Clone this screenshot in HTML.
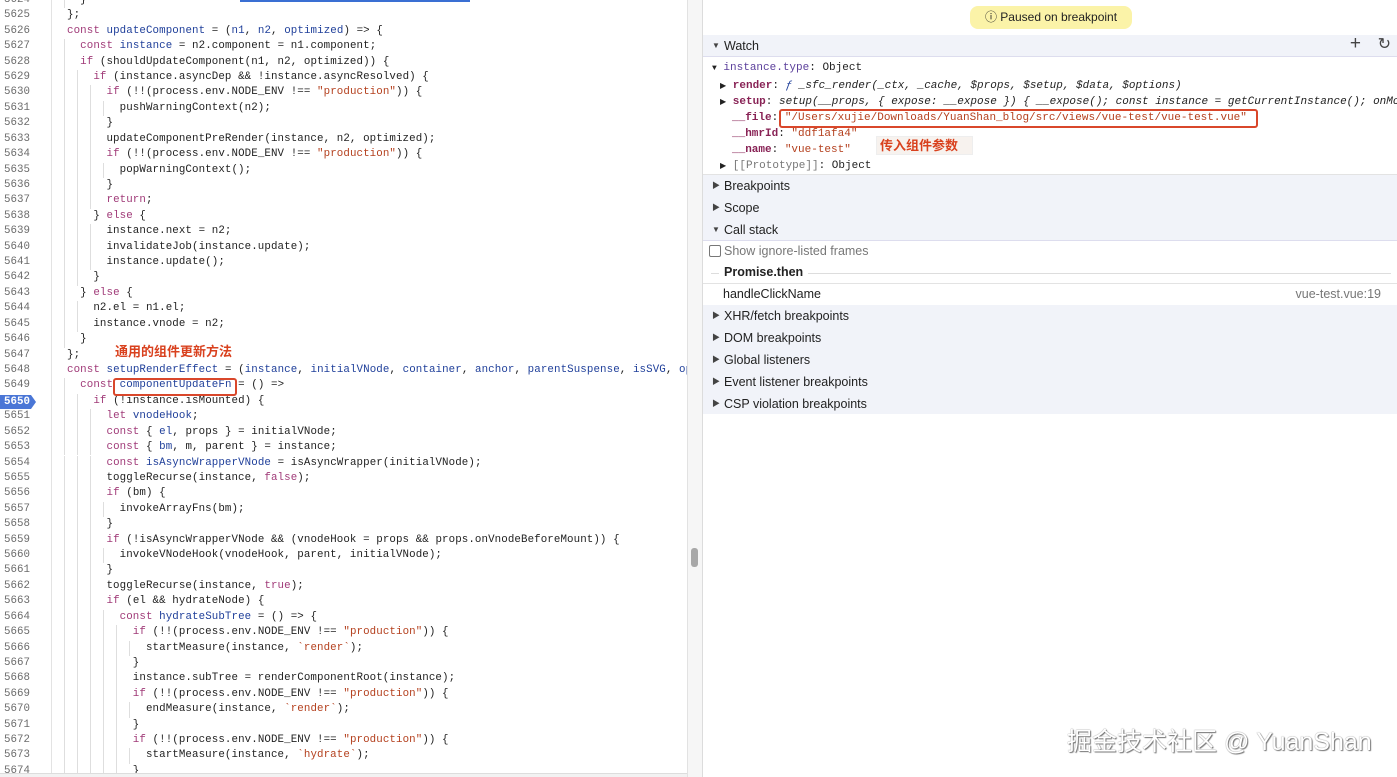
<!DOCTYPE html>
<html><head><meta charset="utf-8">
<style>
*{margin:0;padding:0;box-sizing:border-box}
body{width:1397px;height:777px;overflow:hidden;background:#fff;position:relative;font-family:"Liberation Sans","Noto Sans CJK SC",sans-serif}
#code{position:absolute;left:0;top:0;width:687px;height:773px;overflow:hidden}
.ln{position:absolute;left:0;height:15.42px;width:687px;font-family:"Liberation Mono",monospace;font-size:10.8px;line-height:15.42px;white-space:pre;color:#222}
.num{position:absolute;left:4px;color:#6b6b6b}
.txt{position:absolute;left:67px;letter-spacing:0.1px}
.g{position:absolute;top:0;width:1px;height:15.42px;background:#dedede}
.k{color:#a03a78}.d{color:#1f3f9a}.s{color:#b4401e}
.bp{position:absolute;left:0;width:31px;height:14px;background:#4a76d6;color:#fff;font-weight:bold}
.bp:after{content:"";position:absolute;right:-5px;top:0;border-left:5px solid #4a76d6;border-top:7px solid transparent;border-bottom:7px solid transparent}
#right{position:absolute;left:703px;top:0;width:694px;height:777px;font-size:12.5px;color:#222}
.hdr{position:absolute;left:0;width:694px;height:22px;line-height:22px;background:#f1f3f9;padding-left:21px}
.tri{position:absolute;left:9px;font-size:8px;color:#444}
.w{position:absolute;font-family:"Liberation Mono",monospace;font-size:11px;white-space:pre;line-height:16px}
.red{border:2px solid #d9472b;border-radius:3px;position:absolute}
</style></head><body>
<div style="position:absolute;left:240px;top:0;width:230px;height:2px;background:#3a6fd3"></div>
<div style="position:absolute;left:51px;top:0;width:1px;height:773px;background:#e3e3e3"></div>
<div id="code"></div>
<div style="position:absolute;left:687px;top:0;width:1px;height:777px;background:#e2e2e2"></div>
<div style="position:absolute;left:688px;top:0;width:14px;height:777px;background:#f6f6f6"></div>
<div style="position:absolute;left:702px;top:0;width:1px;height:777px;background:#dcdcdc"></div>
<div style="position:absolute;left:691px;top:548px;width:7px;height:19px;border-radius:3px;background:#a8a8a8"></div>
<div style="position:absolute;left:0;top:773px;width:687px;height:4px;background:#f2f2f2;border-top:1px solid #ddd"></div>

<div class="red" style="left:113px;top:378px;width:124px;height:18px"></div>
<div style="position:absolute;left:115px;top:341px;font-size:13px;color:#d9411e;font-weight:bold">通用的组件更新方法</div>

<div id="right">
 <div style="position:absolute;left:267px;top:6px;width:162px;height:23px;border-radius:8px;background:#fbf3a8;text-align:center;line-height:23px;font-size:12px">ⓘ Paused on breakpoint</div>
 <div class="hdr" style="top:35px;border-bottom:1px solid #dde"><span class="tri" style="top:0">▼</span>Watch<span style="position:absolute;right:36px;top:-2px;font-size:19px;color:#444">+</span><span style="position:absolute;right:6px;top:-1px;font-size:16px;color:#444">↻</span></div>
 <div class="w" style="left:9px;top:60px"><span style="font-size:8px">▼</span> <span style="color:#5b3f9b">instance.type</span>: Object</div>
 <div class="w" style="left:17px;top:78px"><span style="font-size:8px">▶</span> <b style="color:#882255">render</b>: <i><span style="color:#1f3f9a">ƒ</span> _sfc_render(_ctx, _cache, $props, $setup, $data, $options)</i></div>
 <div class="w" style="left:17px;top:94px"><span style="font-size:8px">▶</span> <b style="color:#882255">setup</b>: <i>setup(__props, { expose: __expose }) { __expose(); const instance = getCurrentInstance(); onMo</i></div>
 <div class="w" style="left:29px;top:110px"><b style="color:#882255">__file</b>: <span class="s">"/Users/xujie/Downloads/YuanShan_blog/src/views/vue-test/vue-test.vue"</span></div>
 <div class="w" style="left:29px;top:126px"><b style="color:#882255">__hmrId</b>: <span class="s">"ddf1afa4"</span></div>
 <div class="w" style="left:29px;top:142px"><b style="color:#882255">__name</b>: <span class="s">"vue-test"</span></div>
 <div class="w" style="left:17px;top:158px"><span style="font-size:8px">▶</span> <span style="color:#777">[[Prototype]]</span>: Object</div>
 <div class="red" style="left:76px;top:109px;width:479px;height:19px"></div>
 <div style="position:absolute;left:173px;top:136px;width:97px;height:19px;background:#f7f2ee;border:1px solid #eee;color:#d9411e;font-size:13px;font-weight:bold;line-height:18px;padding-left:3px">传入组件参数</div>
 <div style="position:absolute;left:0;top:174px;width:694px;height:1px;background:#e3e3e3"></div>
 <div class="hdr" style="top:175px"><span class="tri">▶</span>Breakpoints</div>
 <div class="hdr" style="top:197px"><span class="tri">▶</span>Scope</div>
 <div class="hdr" style="top:219px;border-bottom:1px solid #dde"><span class="tri">▼</span>Call stack</div>
 <div style="position:absolute;left:6px;top:245px;width:12px;height:12px;border:1px solid #777;border-radius:2px"></div>
 <div style="position:absolute;left:21px;top:244px;color:#777">Show ignore-listed frames</div>
 <div style="position:absolute;left:8px;top:273px;width:680px;height:1px;background:#ddd"></div>
 <div style="position:absolute;left:16px;top:265px;background:#fff;padding:0 5px;font-weight:bold">Promise.then</div>
 <div style="position:absolute;left:0;top:283px;width:694px;height:1px;background:#e3e3e3"></div>
 <div style="position:absolute;left:20px;top:287px">handleClickName</div>
 <div style="position:absolute;right:16px;top:287px;color:#777">vue-test.vue:19</div>
 <div class="hdr" style="top:305px"><span class="tri">▶</span>XHR/fetch breakpoints</div>
 <div class="hdr" style="top:327px"><span class="tri">▶</span>DOM breakpoints</div>
 <div class="hdr" style="top:349px"><span class="tri">▶</span>Global listeners</div>
 <div class="hdr" style="top:371px"><span class="tri">▶</span>Event listener breakpoints</div>
 <div class="hdr" style="top:393px;height:21px"><span class="tri">▶</span>CSP violation breakpoints</div>
 <div style="position:absolute;left:364px;top:722px;font-size:25px;color:#fff;text-shadow:0 0 1px #666,1px 1px 1px #777;font-family:'Liberation Sans','Noto Sans CJK SC',sans-serif">掘金技术社区 @ YuanShan</div>
</div>

<script>
var L=[
"  }",
"};",
"const updateComponent = (n1, n2, optimized) => {",
"  const instance = n2.component = n1.component;",
"  if (shouldUpdateComponent(n1, n2, optimized)) {",
"    if (instance.asyncDep && !instance.asyncResolved) {",
"      if (!!(process.env.NODE_ENV !== \"production\")) {",
"        pushWarningContext(n2);",
"      }",
"      updateComponentPreRender(instance, n2, optimized);",
"      if (!!(process.env.NODE_ENV !== \"production\")) {",
"        popWarningContext();",
"      }",
"      return;",
"    } else {",
"      instance.next = n2;",
"      invalidateJob(instance.update);",
"      instance.update();",
"    }",
"  } else {",
"    n2.el = n1.el;",
"    instance.vnode = n2;",
"  }",
"};",
"const setupRenderEffect = (instance, initialVNode, container, anchor, parentSuspense, isSVG, optimized) => {",
"  const componentUpdateFn = () =>",
"    if (!instance.isMounted) {",
"      let vnodeHook;",
"      const { el, props } = initialVNode;",
"      const { bm, m, parent } = instance;",
"      const isAsyncWrapperVNode = isAsyncWrapper(initialVNode);",
"      toggleRecurse(instance, false);",
"      if (bm) {",
"        invokeArrayFns(bm);",
"      }",
"      if (!isAsyncWrapperVNode && (vnodeHook = props && props.onVnodeBeforeMount)) {",
"        invokeVNodeHook(vnodeHook, parent, initialVNode);",
"      }",
"      toggleRecurse(instance, true);",
"      if (el && hydrateNode) {",
"        const hydrateSubTree = () => {",
"          if (!!(process.env.NODE_ENV !== \"production\")) {",
"            startMeasure(instance, `render`);",
"          }",
"          instance.subTree = renderComponentRoot(instance);",
"          if (!!(process.env.NODE_ENV !== \"production\")) {",
"            endMeasure(instance, `render`);",
"          }",
"          if (!!(process.env.NODE_ENV !== \"production\")) {",
"            startMeasure(instance, `hydrate`);",
"          }"
];
function esc(s){return s.replace(/&/g,"&amp;").replace(/</g,"&lt;").replace(/>/g,"&gt;")}
function hl(s,i){
  var out="",re=/("[^"]*"|`[^`]*`|[A-Za-z_$][\w$]*|[^A-Za-z_$"`]+)/g,m,prevKw=false;
  var params=(i==2||i==24);var inParen=false;
  while((m=re.exec(s))){var t=m[0];
    if(t[0]=='"'||t[0]=='`'){out+='<span class="s">'+esc(t)+'</span>';continue}
    if(/^[A-Za-z_$]/.test(t)){
      if(/^(const|let|if|else|return|true|false)$/.test(t)){out+='<span class="k">'+t+'</span>';prevKw=(t=="const"||t=="let");continue}
      if(prevKw||(params&&inParen)){out+='<span class="d">'+t+'</span>';prevKw=false;continue}
      out+=t;continue}
    if(params&&t.indexOf("(")>=0)inParen=true;
    if(params&&t.indexOf(")")>=0)inParen=false;
    if(prevKw&&t.indexOf("{")>=0){prevKw=true}else if(t.trim()!=""&&!/^[\s,{]+$/.test(t))prevKw=false;
    out+=esc(t);
  }
  return out;
}
var c=document.getElementById("code"),h="";
for(var i=0;i<L.length;i++){
  var yy=-7.1+i*15.42,n=5624+i,s=L[i],lead=s.match(/^ */)[0].length,lv=lead/2;
  var g="";for(var k=1;k<=lv;k++)g+='<div class="g" style="left:'+(67+(k-1)*13-3)+'px"></div>';
  var num=(n==5650)?'<span class="bp" style="top:0.7px"><span style="padding-left:4px">5650</span></span>':'<span class="num">'+n+'</span>';
  h+='<div class="ln" style="top:'+yy+'px">'+g+num+'<span class="txt">'+hl(s,i)+'</span></div>';
}
c.innerHTML=h;
</script>
</body></html>
